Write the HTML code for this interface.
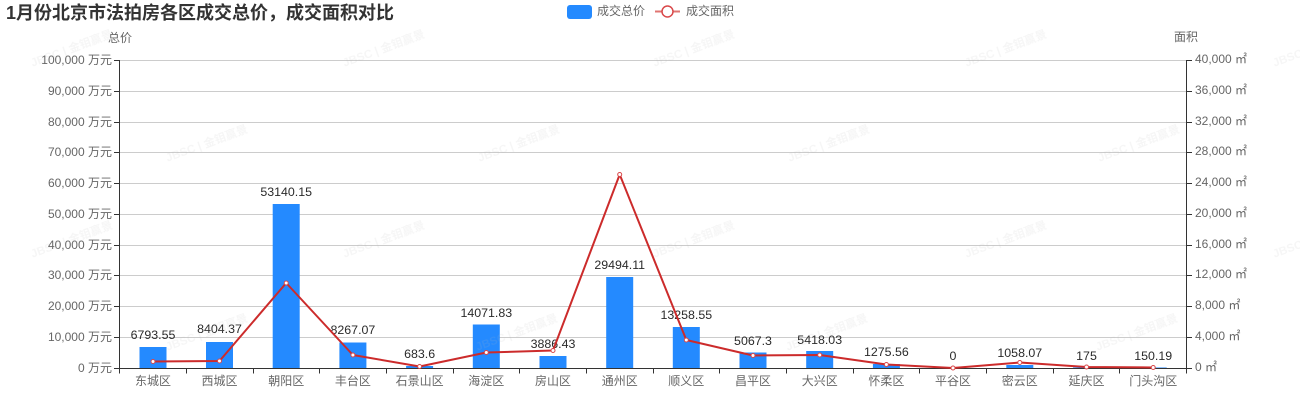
<!DOCTYPE html>
<html>
<head>
<meta charset="utf-8">
<style>
html,body{margin:0;padding:0;background:#fff;width:1300px;height:400px;overflow:hidden}
svg{display:block;font-family:"Liberation Sans","Noto Sans CJK SC",sans-serif}
.l{font-size:12px;fill:#666;text-anchor:end}
.r{font-size:12px;fill:#666;text-anchor:start}
.x{font-size:12px;fill:#666;text-anchor:middle}
.d{font-size:12.4px;fill:#2a2a2a;text-anchor:middle}
.w{font-size:11.5px;font-weight:bold;fill:#bbb;fill-opacity:.13;text-anchor:middle}
</style>
</head>
<body>
<svg width="1300" height="400" viewBox="0 0 1300 400" xmlns="http://www.w3.org/2000/svg">
<text x="6" y="19" font-size="18" font-weight="bold" fill="#333">1月份北京市法拍房各区成交总价，成交面积对比</text>

<rect x="567" y="5" width="25" height="14" rx="3" fill="#248aff"/>
<text x="597" y="15" font-size="12" fill="#666">成交总价</text>
<path d="M655 11.5H680" stroke="#d9534f" stroke-width="2" opacity=".8"/>
<circle cx="667.5" cy="11.5" r="5.5" fill="#fff" stroke="#d9484a" stroke-width="1.5"/>
<text x="686" y="15" font-size="12" fill="#666">成交面积</text>

<text x="120" y="42" font-size="12" fill="#666" text-anchor="middle">总价</text>
<text x="1186" y="41" font-size="12" fill="#666" text-anchor="middle">面积</text>

<g stroke="#ccc" stroke-width="1" fill="none">
<path d="M119.5 60.5H1186.5M119.5 91.5H1186.5M119.5 122.5H1186.5M119.5 152.5H1186.5M119.5 183.5H1186.5M119.5 214.5H1186.5M119.5 245.5H1186.5M119.5 275.5H1186.5M119.5 306.5H1186.5M119.5 337.5H1186.5"/>
</g>

<g fill="#248aff">
<rect x="139.5" y="347" width="27" height="21"/>
<rect x="206" y="342" width="27" height="26"/>
<rect x="272.7" y="204" width="27" height="164"/>
<rect x="339.4" y="342.5" width="27" height="25.5"/>
<rect x="406.1" y="366" width="27" height="2"/>
<rect x="472.8" y="324.5" width="27" height="43.5"/>
<rect x="539.5" y="356" width="27" height="12"/>
<rect x="606.2" y="277" width="27" height="91"/>
<rect x="672.8" y="327" width="27" height="41"/>
<rect x="739.5" y="352.5" width="27" height="15.5"/>
<rect x="806.2" y="351" width="27" height="17"/>
<rect x="872.9" y="364" width="27" height="4"/>
<rect x="1006.3" y="365" width="27" height="3"/>
<rect x="1073" y="367.5" width="27" height=".5"/>
<rect x="1139.7" y="367.5" width="27" height=".5"/>
</g>

<g stroke="#333" stroke-width="1" fill="none">
<path d="M119.5 60V368.5M1186.5 60V368.5M119 368.5H1187"/>
<path d="M114 60.5H119.5M114 91.5H119.5M114 122.5H119.5M114 152.5H119.5M114 183.5H119.5M114 214.5H119.5M114 245.5H119.5M114 275.5H119.5M114 306.5H119.5M114 337.5H119.5M114 368.5H119.5"/>
<path d="M1186.5 60.5H1192M1186.5 91.5H1192M1186.5 122.5H1192M1186.5 152.5H1192M1186.5 183.5H1192M1186.5 214.5H1192M1186.5 245.5H1192M1186.5 275.5H1192M1186.5 306.5H1192M1186.5 337.5H1192M1186.5 368.5H1192"/>
<path d="M119.5 368V373.5M186.5 368V373.5M253.5 368V373.5M319.5 368V373.5M386.5 368V373.5M453.5 368V373.5M519.5 368V373.5M586.5 368V373.5M653.5 368V373.5M719.5 368V373.5M786.5 368V373.5M853.5 368V373.5M919.5 368V373.5M986.5 368V373.5M1053.5 368V373.5M1119.5 368V373.5M1186.5 368V373.5"/>
</g>

<g class="labels">
<text class="l" x="112" y="64">100,000 万元</text>
<text class="l" x="112" y="95">90,000 万元</text>
<text class="l" x="112" y="126">80,000 万元</text>
<text class="l" x="112" y="156">70,000 万元</text>
<text class="l" x="112" y="187">60,000 万元</text>
<text class="l" x="112" y="218">50,000 万元</text>
<text class="l" x="112" y="249">40,000 万元</text>
<text class="l" x="112" y="279">30,000 万元</text>
<text class="l" x="112" y="310">20,000 万元</text>
<text class="l" x="112" y="341">10,000 万元</text>
<text class="l" x="112" y="372">0 万元</text>

<text class="r" x="1195" y="63">40,000 ㎡</text>
<text class="r" x="1195" y="94">36,000 ㎡</text>
<text class="r" x="1195" y="125">32,000 ㎡</text>
<text class="r" x="1195" y="155">28,000 ㎡</text>
<text class="r" x="1195" y="186">24,000 ㎡</text>
<text class="r" x="1195" y="217">20,000 ㎡</text>
<text class="r" x="1195" y="248">16,000 ㎡</text>
<text class="r" x="1195" y="278">12,000 ㎡</text>
<text class="r" x="1195" y="309">8,000 ㎡</text>
<text class="r" x="1195" y="340">4,000 ㎡</text>
<text class="r" x="1195" y="371">0 ㎡</text>

<text class="x" x="153" y="385">东城区</text>
<text class="x" x="219.5" y="385">西城区</text>
<text class="x" x="286.2" y="385">朝阳区</text>
<text class="x" x="352.9" y="385">丰台区</text>
<text class="x" x="419.6" y="385">石景山区</text>
<text class="x" x="486.3" y="385">海淀区</text>
<text class="x" x="553" y="385">房山区</text>
<text class="x" x="619.7" y="385">通州区</text>
<text class="x" x="686.3" y="385">顺义区</text>
<text class="x" x="753" y="385">昌平区</text>
<text class="x" x="819.7" y="385">大兴区</text>
<text class="x" x="886.4" y="385">怀柔区</text>
<text class="x" x="953" y="385">平谷区</text>
<text class="x" x="1019.8" y="385">密云区</text>
<text class="x" x="1086.5" y="385">延庆区</text>
<text class="x" x="1153.2" y="385">门头沟区</text>
</g>

<g>
<text class="d" x="153" y="339">6793.55</text>
<text class="d" x="219.5" y="333">8404.37</text>
<text class="d" x="286.2" y="196">53140.15</text>
<text class="d" x="352.9" y="334">8267.07</text>
<text class="d" x="419.6" y="358">683.6</text>
<text class="d" x="486.3" y="317">14071.83</text>
<text class="d" x="553" y="348">3886.43</text>
<text class="d" x="619.7" y="269">29494.11</text>
<text class="d" x="686.3" y="319">13258.55</text>
<text class="d" x="753" y="345">5067.3</text>
<text class="d" x="819.7" y="344">5418.03</text>
<text class="d" x="886.4" y="356">1275.56</text>
<text class="d" x="953" y="360">0</text>
<text class="d" x="1019.8" y="357">1058.07</text>
<text class="d" x="1086.5" y="360">175</text>
<text class="d" x="1153.2" y="360">150.19</text>
</g>

<polyline fill="none" stroke="#cc2b2b" stroke-width="2" stroke-linejoin="round" points="153,361.5 219.5,361 286.2,283 352.9,355 419.6,366.5 486.3,352.5 553,350.5 619.7,174.5 686.3,340 753,355.5 819.7,355 886.4,364.5 953,368 1019.8,362.5 1086.5,367 1153.2,367.5"/>
<g fill="#fff" stroke="#d9484a" stroke-width="1">
<circle cx="153" cy="361.5" r="2"/>
<circle cx="219.5" cy="361" r="2"/>
<circle cx="286.2" cy="283" r="2"/>
<circle cx="352.9" cy="355" r="2"/>
<circle cx="419.6" cy="366.5" r="2"/>
<circle cx="486.3" cy="352.5" r="2"/>
<circle cx="553" cy="350.5" r="2"/>
<circle cx="619.7" cy="174.5" r="2"/>
<circle cx="686.3" cy="340" r="2"/>
<circle cx="753" cy="355.5" r="2"/>
<circle cx="819.7" cy="355" r="2"/>
<circle cx="886.4" cy="364.5" r="2"/>
<circle cx="953" cy="368" r="2"/>
<circle cx="1019.8" cy="362.5" r="2"/>
<circle cx="1086.5" cy="367" r="2"/>
<circle cx="1153.2" cy="367.5" r="2"/>
</g>

<g>
<text class="w" transform="translate(73,52) rotate(-20)">JBSC | 金钼赢景</text>
<text class="w" transform="translate(385,52) rotate(-20)">JBSC | 金钼赢景</text>
<text class="w" transform="translate(695,52) rotate(-20)">JBSC | 金钼赢景</text>
<text class="w" transform="translate(1007,52) rotate(-20)">JBSC | 金钼赢景</text>
<text class="w" transform="translate(1315,52) rotate(-20)">JBSC | 金钼赢景</text>
<text class="w" transform="translate(208,147) rotate(-20)">JBSC | 金钼赢景</text>
<text class="w" transform="translate(520,147) rotate(-20)">JBSC | 金钼赢景</text>
<text class="w" transform="translate(830,147) rotate(-20)">JBSC | 金钼赢景</text>
<text class="w" transform="translate(1140,147) rotate(-20)">JBSC | 金钼赢景</text>
<text class="w" transform="translate(73,243) rotate(-20)">JBSC | 金钼赢景</text>
<text class="w" transform="translate(385,243) rotate(-20)">JBSC | 金钼赢景</text>
<text class="w" transform="translate(695,243) rotate(-20)">JBSC | 金钼赢景</text>
<text class="w" transform="translate(1007,243) rotate(-20)">JBSC | 金钼赢景</text>
<text class="w" transform="translate(1315,243) rotate(-20)">JBSC | 金钼赢景</text>
<text class="w" transform="translate(208,336) rotate(-20)">JBSC | 金钼赢景</text>
<text class="w" transform="translate(518,336) rotate(-20)">JBSC | 金钼赢景</text>
<text class="w" transform="translate(828,336) rotate(-20)">JBSC | 金钼赢景</text>
<text class="w" transform="translate(1138,336) rotate(-20)">JBSC | 金钼赢景</text>
</g>
</svg>
</body>
</html>
